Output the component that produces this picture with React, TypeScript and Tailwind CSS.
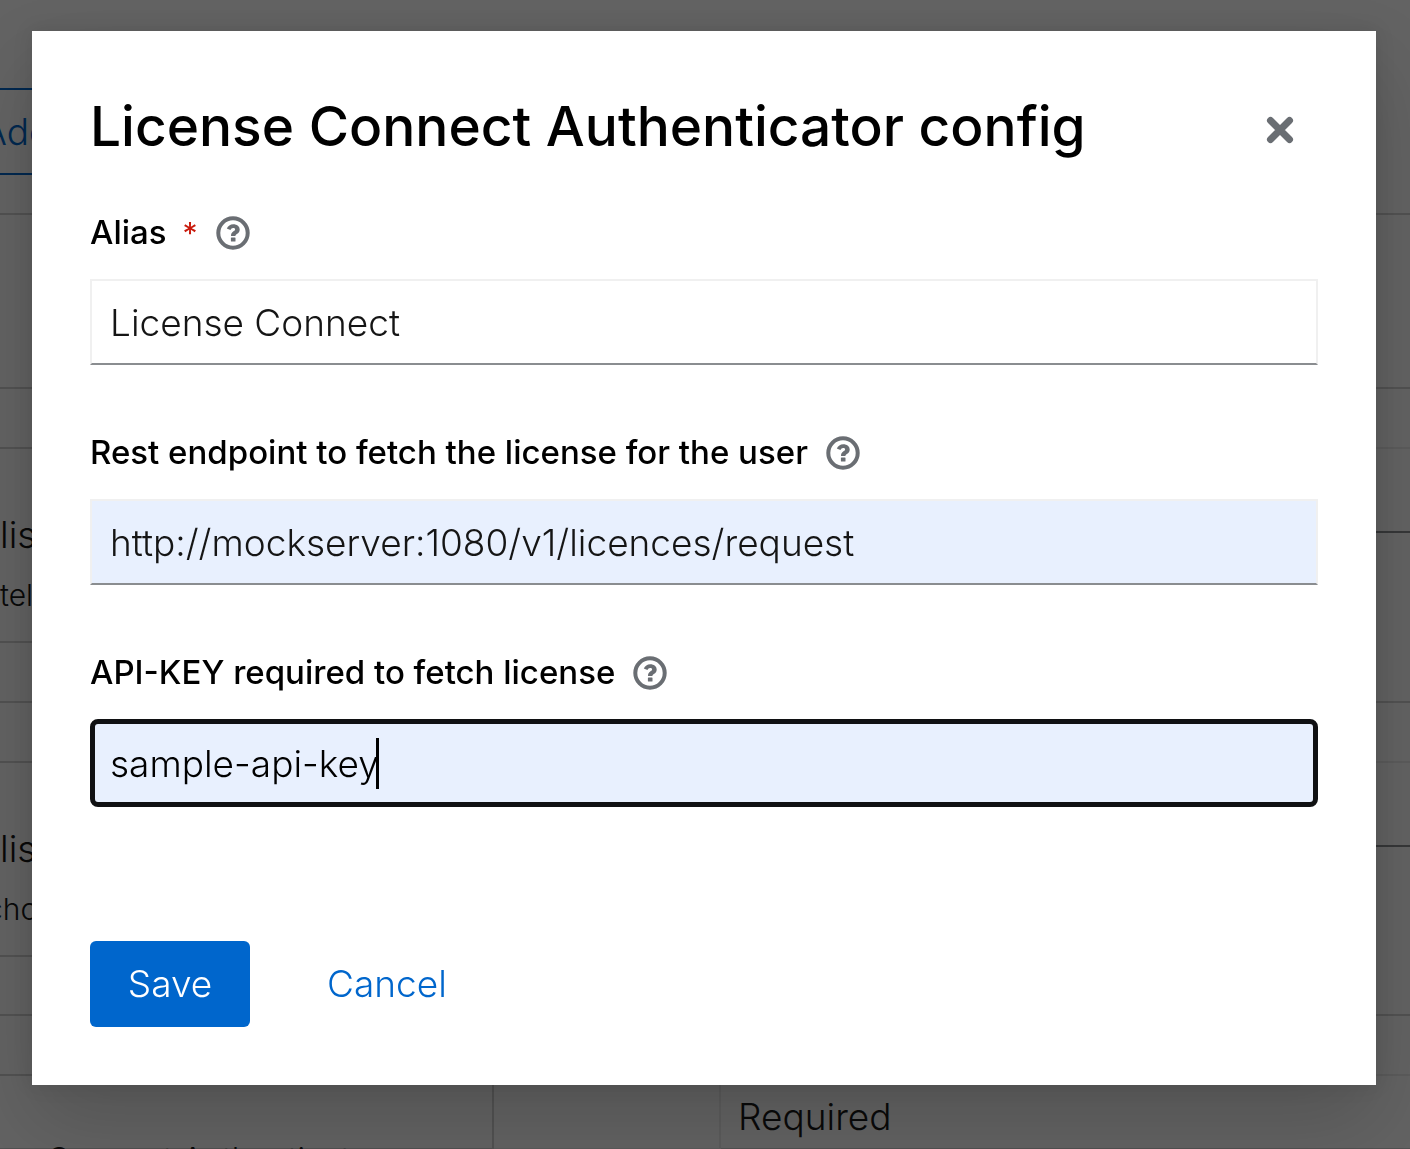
import type { ReactNode } from 'react';

function HelpIcon() {
  return (
    <svg viewBox="0 0 34 34" className="size-[34px]" fill="none" aria-hidden="true">
      <circle cx="17" cy="17" r="14.7" stroke="#6a6e73" strokeWidth="4" />
      <path
        d="M10.800 12.600C12 9.800 14.200 8.200 17.300 8.200c3.700 0 6.400 2.100 6.400 5.300 0 2.200-1.100 3.400-2.800 4.500-1.100.7-1.500 1.100-1.500 2h-4.400c0-2.400.7-3.500 2.500-4.700 1.100-.7 1.600-1.100 1.600-1.800 0-.9-.9-1.400-2-1.400-1.300 0-2 .7-2.700 2z"
        fill="#6a6e73"
      />
      <rect x="14.900" y="21.400" width="4.600" height="4.200" rx="0.600" fill="#6a6e73" />
    </svg>
  );
}

function CloseIcon() {
  return (
    <svg viewBox="0 0 28 28" className="size-7" fill="none" aria-hidden="true">
      <path d="M4.500 4.500l19 19M23.500 4.500l-19 19" stroke="#6a6e73" strokeWidth="7" strokeLinecap="round" />
    </svg>
  );
}

function Field({ id, label, required, children }: { id: string; label: string; required?: boolean; children: ReactNode }) {
  return (
    <div>
      <div className="mb-[22px] flex h-12 items-center gap-[18px] text-[33px] font-medium">
        <label htmlFor={id} className="flex items-center gap-4">
          {label}
          {required && <span className="text-[30px] font-normal text-[#c9190b]">*</span>}
        </label>
        <button type="button" aria-label={`Help for ${label}`}>
          <HelpIcon />
        </button>
      </div>
      {children}
    </div>
  );
}

function StepRow({ name, detail, shift }: { name: string; detail: string; shift: string }) {
  return (
    <div className="flex h-[194px]">
      <div className="w-[494px] border-b-2 border-[#d2d2d2] pt-[58px] whitespace-nowrap">
        <p className="text-[37px] leading-[56px]">{name}</p>
        <p className={`text-[30px] leading-[64px] ${shift}`}>{detail}</p>
      </div>
      <div className="flex-1">
        <div className="h-[84px] border-b-2 border-[#8a8d90]" />
      </div>
    </div>
  );
}

function SplitRule() {
  return (
    <div className="flex h-[60px]">
      <div className="w-[494px] border-b-2 border-[#d2d2d2]" />
      <div className="flex-1 border-b-2 border-[#ececec]" />
    </div>
  );
}

function FlowPage() {
  return (
    <div className="h-screen overflow-hidden bg-white font-light text-[#151515]" aria-hidden="true">
      <div className="h-[215px] border-b-2 border-[#d2d2d2] pt-[88px]">
        <div className="-ml-[18px] h-[87px] w-[240px] border-y-2 border-[#0066cc] text-[37px] leading-[84px] text-[#0066cc]">Add</div>
      </div>
      <div className="h-[174px] border-b-2 border-[#d2d2d2]" />
      <SplitRule />
      <StepRow name="lis" detail="tel" shift="ml-0" />
      <div className="h-[60px] border-b-2 border-[#d2d2d2]" />
      <SplitRule />
      <StepRow name="lis" detail="cho" shift="-ml-[14px]" />
      <div className="h-[59px] border-b-2 border-[#d2d2d2]" />
      <SplitRule />
      <div className="flex h-[73px]">
        <div className="w-[494px] border-r-2 border-b border-[#d2d2d2]">
          <p className="ml-[47px] pt-[66px] text-[32px] leading-[36px]">Connect Authenticator</p>
        </div>
        <div className="w-[227px] border-r-2 border-b border-[#ececec]" />
        <div className="flex-1 border-b border-[#d2d2d2] pt-[13px] pl-[17px] text-[37px] leading-[56px]">Required</div>
      </div>
    </div>
  );
}

const inputBase =
  'block h-[86px] w-full border-2 border-[#f0f0f0] border-b-[#8a8d90] px-[18px] text-[37px] font-light text-[#151515] outline-none';

export default function App() {
  return (
    <div className="font-['Inter',sans-serif]">
      <FlowPage />
      <div className="fixed inset-0 flex items-start bg-[#030303]/62 pt-[31px] pr-[34px] pl-8">
        <div
          role="dialog"
          aria-modal="true"
          aria-labelledby="dialog-title"
          className="w-full bg-white p-[58px] text-black shadow-[0_38px_77px_0_rgba(3,3,3,0.16),0_0_19px_0_rgba(3,3,3,0.1)]"
        >
          <header className="mb-[46px] flex items-center justify-between pr-6">
            <h1 id="dialog-title" className="text-[55px] leading-[74px] font-medium">
              License Connect Authenticator config
            </h1>
            <button type="button" aria-label="Close" className="pt-2">
              <CloseIcon />
            </button>
          </header>
          <form onSubmit={(e) => e.preventDefault()}>
            <div className="flex flex-col gap-16">
              <Field id="alias" label="Alias" required>
                <input id="alias" type="text" defaultValue="License Connect" className={inputBase} />
              </Field>
              <Field id="endpoint" label="Rest endpoint to fetch the license for the user">
                <input
                  id="endpoint"
                  type="text"
                  defaultValue="http://mockserver:1080/v1/licences/request"
                  className={`${inputBase} bg-[#e8f0fe]`}
                />
              </Field>
              <Field id="api-key" label="API-KEY required to fetch license">
                <div className="relative">
                  <input
                    id="api-key"
                    type="text"
                    defaultValue="sample-api-key"
                    className="block h-[88px] w-full rounded-lg border-[5px] border-[#101113] bg-[#e8f0fe] px-[15px] text-[37px] font-light text-black outline-none"
                  />
                  <span className="absolute top-[19px] left-[286px] h-[51px] w-[3px] bg-black" />
                </div>
              </Field>
            </div>
            <footer className="mt-[134px] flex gap-10 text-[37px] font-light">
              <button type="submit" className="h-[86px] w-40 rounded-md bg-[#0066cc] text-white">
                Save
              </button>
              <button type="button" className="h-[86px] px-[37px] text-[#0066cc]">
                Cancel
              </button>
            </footer>
          </form>
        </div>
      </div>
    </div>
  );
}
